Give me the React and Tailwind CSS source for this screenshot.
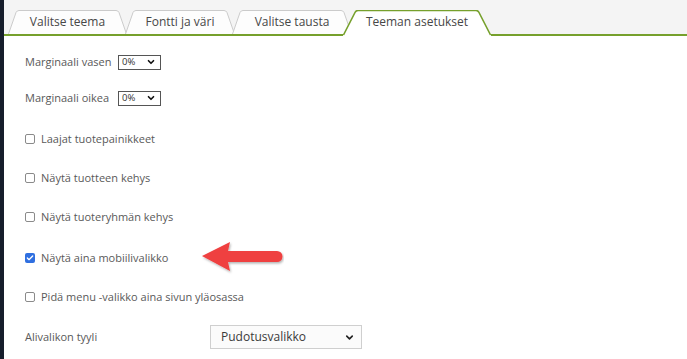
import React from 'react';
import { ChevronDown, Check } from 'lucide-react';

const tabPath = (w, s) =>
  `M0.5 24 L${s - 1} 2.5 Q${s} 0.5 ${s + 2} 0.5 L${w - s - 2} 0.5 Q${w - s} 0.5 ${w - s + 1} 2.5 L${w - 0.5} 24`;

const Tab = ({ label, w, active, className }) => (
  <div className={`relative flex items-center justify-center ${className}`}>
    <svg
      className="absolute inset-0 h-full w-full"
      viewBox={`0 0 ${w} ${active ? 26 : 24}`}
      preserveAspectRatio="none"
    >
      {active ? (
        <>
          <path d={`${tabPath(w, 13)} L${w} 26 L0 26 Z`} fill="#ffffff" />
          <path d={tabPath(w, 13).replace('24', '25').replace(/24$/, '25')} fill="none" stroke="#76a02c" strokeWidth="1.6" />
        </>
      ) : (
        <path d={tabPath(w, 9)} fill="#fdfdfd" stroke="#cbcbcb" strokeWidth="1" />
      )}
    </svg>
    <span className={`relative text-[12px] text-[#474747] ${active ? 'pb-[2px]' : ''}`}>{label}</span>
  </div>
);

const Box = ({ checked }) =>
  checked ? (
    <span className="flex h-[10px] w-[10px] items-center justify-center rounded-[2px] bg-[#2f6fe0]">
      <Check className="h-[8px] w-[8px] text-white" strokeWidth={4} />
    </span>
  ) : (
    <span className="h-[10px] w-[10px] rounded-[2px] border border-[#8a8a8a] bg-white" />
  );

const CheckRow = ({ label, checked, className, children }) => (
  <div className={`relative flex h-[20px] items-center gap-[6px] ${className}`}>
    <Box checked={checked} />
    <span>{label}</span>
    {children}
  </div>
);

const SmallSelect = () => (
  <div className="flex h-[15px] w-[43px] items-center justify-between border border-[#555] bg-white pl-[3px] pr-[4px] text-[9.5px] leading-none text-[#333]">
    <span>0%</span>
    <ChevronDown className="h-[10px] w-[10px] text-[#111]" strokeWidth={4} />
  </div>
);

export default function App() {
  return (
    <div className="flex min-h-[359px] w-full bg-white font-['Open_Sans',sans-serif]">
      <div className="w-[4px] shrink-0 bg-[#161d2b]" />
      <div className="flex-1">
        <div className="flex h-[36px] items-end border-b-2 border-[#76a02c] bg-[#f4f4f4]">
          <Tab label="Valitse teema" w={119} className="ml-[4px] h-[24px] w-[119px]" />
          <Tab label="Fontti ja väri" w={110} className="-ml-[2px] h-[24px] w-[110px]" />
          <Tab label="Valitse tausta" w={120} className="-ml-[3px] h-[24px] w-[120px]" />
          <Tab label="Teeman asetukset" w={148} active className="z-10 -mb-[2px] -ml-[9px] h-[26px] w-[148px]" />
        </div>

        <div className="flex flex-col pl-[21px] text-[11px] text-[#595959]">
          <div className="mt-[16px] flex h-[20px] items-center">
            <span className="w-[93px]">Marginaali vasen</span>
            <SmallSelect />
          </div>
          <div className="mt-[16px] flex h-[20px] items-center">
            <span className="w-[93px]">Marginaali oikea</span>
            <SmallSelect />
          </div>
          <CheckRow label="Laajat tuotepainikkeet" className="mt-[21px]" />
          <CheckRow label="Näytä tuotteen kehys" className="mt-[19px]" />
          <CheckRow label="Näytä tuoteryhmän kehys" className="mt-[19px]" />
          <CheckRow label="Näytä aina mobiilivalikko" checked className="mt-[21px]">
            <svg
              className="absolute left-[175px] top-[-9px]"
              width="84"
              height="38"
              viewBox="0 0 84 38"
            >
              <defs>
                <filter id="sh" x="-10%" y="-20%" width="120%" height="150%">
                  <feDropShadow dx="1" dy="1.5" stdDeviation="1.2" floodColor="#000" floodOpacity="0.3" />
                </filter>
              </defs>
              <g filter="url(#sh)">
                <path d="M2 17 L30 3 L28 12 L77 12 A5.5 5.5 0 0 1 77 23 L28 23 L30 32 Z" fill="#ef3f3f" />
              </g>
            </svg>
          </CheckRow>
          <CheckRow label="Pidä menu -valikko aina sivun yläosassa" className="mt-[19px]" />
          <div className="mt-[18px] flex h-[24px] items-center">
            <span className="w-[185px]">Alivalikon tyyli</span>
            <div className="flex h-[24px] w-[152px] items-center justify-between border border-[#cfcfcf] bg-[#fbfbfb] pl-[10px] pr-[6px] text-[12px] text-[#3a3a3a]">
              <span>Pudotusvalikko</span>
              <ChevronDown className="h-[11px] w-[11px] text-[#222]" strokeWidth={3.5} />
            </div>
          </div>
        </div>
      </div>
    </div>
  );
}
